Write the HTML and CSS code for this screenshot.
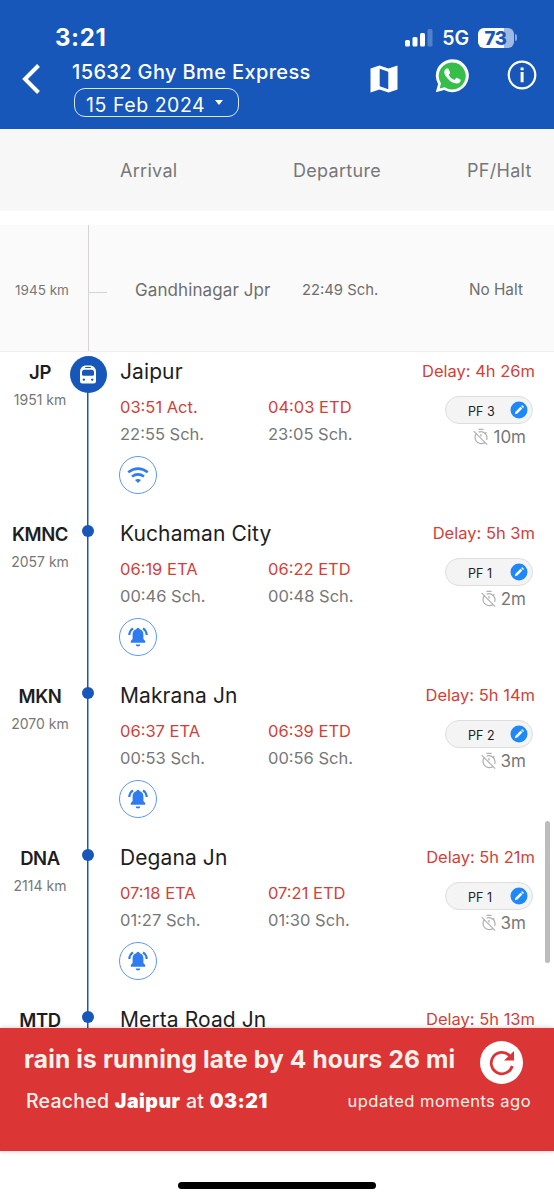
FILE: index.html
```html
<!DOCTYPE html>
<html lang="en">
<head>
<meta charset="utf-8">
<title>15632 Ghy Bme Express</title>
<link rel="stylesheet" href="styles.css">
</head>
<body>
<svg class="defs" width="0" height="0" aria-hidden="true">
  <symbol id="pencil" viewBox="0 0 18 18"><circle cx="9" cy="9" r="8.5" fill="#1e88f7"/><path d="M4.800 13.300l.7-2.600 5-5 1.900 1.900-5 5zM11.100 5.100l.6-.6q.4-.4.900 0l1 1q.4.5 0 .9l-.6.6z" fill="#fff"/></symbol>
  <symbol id="timer" viewBox="0 0 18 18"><g fill="none" stroke="#b0b0b0" stroke-width="1.200"><path d="M6.500 1.300h5M13.400 4.200l1 1M4.700 5.200A6.200 6.200 0 0 0 13.200 14.200M6.600 4.100A6.200 6.200 0 0 1 14.600 12M9 6v2.500M1.700 3.200l13.500 13.500"/></g></symbol>
  <symbol id="bell" viewBox="0 0 22 22"><path d="M11 1.800a1.700 1.700 0 0 0-1.700 1.500C6.500 4.100 5.600 6.200 5.600 8.600v4.500L3.800 15v1.700h14.400V15l-1.800-1.900V8.600c0-2.400-.9-4.500-3.700-5.300A1.700 1.700 0 0 0 11 1.800zM8.700 18.600a2.300 2 0 0 0 4.600 0z" fill="#2f7cf0"/><path d="M6 2.400Q2.700 4.500 2.300 9M16 2.400q3.300 2.100 3.700 6.600" fill="none" stroke="#2f7cf0" stroke-width="2.200"/></symbol>
</svg>
<div class="screen">
  <header class="top">
    <div class="status">
      <span class="clock">3:21</span>
      <svg class="signal" width="28" height="18" viewBox="0 0 28 18"><g fill="#fff"><rect x="0" y="11" width="5" height="6.500" rx="1.500"/><rect x="7.500" y="8" width="5" height="9.500" rx="1.500"/><rect x="15" y="4" width="5" height="13.500" rx="1.500"/><rect x="22.500" y="0" width="5" height="17.500" rx="1.500" opacity=".25"/></g></svg>
      <span class="net">5G</span>
      <span class="battery">73</span><i class="nub"></i>
    </div>
    <div class="bar">
      <svg class="back" width="20" height="32" viewBox="0 0 20 32"><path d="M17.500 2.500L4 16l13.500 13.500" fill="none" stroke="#fff" stroke-width="4"/></svg>
      <div class="heading">
        <h1>15632 Ghy Bme Express</h1>
        <div class="date"><span>15 Feb 2024</span><i></i></div>
      </div>
      <svg class="map" width="28" height="28" viewBox="0 0 28 28"><path fill="#fff" fill-rule="evenodd" d="M.5 3.500L9.500.5 18.500 3.500 27.500.5V24.500L18.500 27.500 9.500 24.500.5 27.500zM9.700 3.800V21.300L18.300 24.200V6.700z"/></svg>
      <svg class="wa" width="34" height="34" viewBox="0 0 34 34"><path d="M.8 33.200L3.100 25A16.500 16.500 0 1 1 9.200 31z" fill="#fff"/><path d="M4.600 29.600L6 24.500A13.500 13.500 0 1 1 9.700 28.200z" fill="#35bf4a"/><path d="M11.500 9.500h1.200q.7 0 1 .8l1.300 3q.3.600-.2 1.200l-1.200 1.500q2 3.700 5.900 5.100l1.600-2q.5-.5 1.100-.2l3.100 1.500q.6.300.4 1.100-.6 3-4.100 3.100-4.800-.2-9-5-3.300-3.500-3.500-6.300.1-2.600 2.400-3.800z" fill="#fff"/></svg>
      <svg class="info" width="30" height="30" viewBox="0 0 30 30"><circle cx="15" cy="15" r="13.300" fill="none" stroke="#fff" stroke-width="2.200"/><path d="M13.600 7.500h3v2.800h-3zM13.600 12h3V22.300h-3z" fill="#fff"/></svg>
    </div>
  </header>
  <div class="columns"><span>Arrival</span><span>Departure</span><span>PF/Halt</span></div>
  <main class="list">
    <section class="pass">
      <span class="km">1945 km</span><i class="tick"></i><span class="pass-name">Gandhinagar Jpr</span><span class="pass-time">22:49 Sch.</span><span class="pass-halt">No Halt</span>
    </section>
    <section class="stop current">
      <div class="place"><b>JP</b><span class="km">1951 km</span></div>
      <div class="rail"><span class="train"><svg width="18" height="20" viewBox="0 0 18 20"><path fill="#fff" fill-rule="evenodd" d="M6 .5h6q5 1.200 5 6.500v9q0 2.500-2.500 2.500h-11Q1 18.500 1 16V7Q1 1.700 6 .5zM6.200 2v1h5.600V2zM5.500 4.800Q3 4.800 3 7.300v2q0 1.500 1.500 1.500h9q1.500 0 1.500-1.500v-2q0-2.500-2.500-2.500zM4.800 13.400a1.200 1.200 0 1 0 .1 0zM13.200 13.400a1.200 1.200 0 1 0 .1 0z"/></svg></span></div>
      <div class="body"><h2>Jaipur</h2><div class="times late"><span>03:51 Act.</span><span>04:03 ETD</span></div><div class="times"><span>22:55 Sch.</span><span>23:05 Sch.</span></div><span class="round"><svg width="22" height="22" viewBox="0 0 22 22"><path d="M1.200 8.300q9.800-7.400 19.600 0M5 12.500q6-4.400 12 0" fill="none" stroke="#2f7cf0" stroke-width="2.600"/><path d="M8 15.900q3-2 6 0l-3 3.100z" fill="#2f7cf0"/></svg></span></div>
      <div class="side"><span class="delay">Delay: 4h 26m</span><span class="pf"><span>PF 3</span><svg width="18" height="18"><use href="#pencil"/></svg></span><span class="halt"><svg width="18" height="18"><use href="#timer"/></svg>10m</span></div>
    </section>
    <section class="stop">
      <div class="place"><b>KMNC</b><span class="km">2057 km</span></div><div class="rail"><i class="dot"></i></div>
      <div class="body"><h2>Kuchaman City</h2><div class="times late"><span>06:19 ETA</span><span>06:22 ETD</span></div><div class="times"><span>00:46 Sch.</span><span>00:48 Sch.</span></div><span class="round"><svg width="22" height="22"><use href="#bell"/></svg></span></div>
      <div class="side"><span class="delay">Delay: 5h 3m</span><span class="pf"><span>PF 1</span><svg width="18" height="18"><use href="#pencil"/></svg></span><span class="halt"><svg width="18" height="18"><use href="#timer"/></svg>2m</span></div>
    </section>
    <section class="stop">
      <div class="place"><b>MKN</b><span class="km">2070 km</span></div><div class="rail"><i class="dot"></i></div>
      <div class="body"><h2>Makrana Jn</h2><div class="times late"><span>06:37 ETA</span><span>06:39 ETD</span></div><div class="times"><span>00:53 Sch.</span><span>00:56 Sch.</span></div><span class="round"><svg width="22" height="22"><use href="#bell"/></svg></span></div>
      <div class="side"><span class="delay">Delay: 5h 14m</span><span class="pf"><span>PF 2</span><svg width="18" height="18"><use href="#pencil"/></svg></span><span class="halt"><svg width="18" height="18"><use href="#timer"/></svg>3m</span></div>
    </section>
    <section class="stop">
      <div class="place"><b>DNA</b><span class="km">2114 km</span></div><div class="rail"><i class="dot"></i></div>
      <div class="body"><h2>Degana Jn</h2><div class="times late"><span>07:18 ETA</span><span>07:21 ETD</span></div><div class="times"><span>01:27 Sch.</span><span>01:30 Sch.</span></div><span class="round"><svg width="22" height="22"><use href="#bell"/></svg></span></div>
      <div class="side"><span class="delay">Delay: 5h 21m</span><span class="pf"><span>PF 1</span><svg width="18" height="18"><use href="#pencil"/></svg></span><span class="halt"><svg width="18" height="18"><use href="#timer"/></svg>3m</span></div>
    </section>
    <section class="stop last">
      <div class="place"><b>MTD</b></div><div class="rail"><i class="dot"></i></div>
      <div class="body"><h2>Merta Road Jn</h2></div>
      <div class="side"><span class="delay">Delay: 5h 13m</span></div>
    </section>
    <i class="scrollbar"></i>
  </main>
  <footer class="alert">
    <div class="running"><strong>rain is running late by 4 hours 26 mi</strong>
      <span class="refresh"><svg width="30" height="30" viewBox="0 0 30 30"><path d="M25.200 18A10.700 10.700 0 1 1 22.500 7.500L25 9.500" fill="none" stroke="#dc3535" stroke-width="2.800"/><path d="M27 3V12.500H17z" fill="#dc3535"/></svg></span></div>
    <div class="reached"><span>Reached <b>Jaipur</b> at <b>03:21</b></span><em>updated moments ago</em></div>
  </footer>
  <div class="home"><i></i></div>
</div>
</body>
</html>
```
FILE: styles.css
```css
* { box-sizing: border-box; }
body { margin: 0; background: #fff; font-family: Inter, Roboto, sans-serif; }
h1, h2 { margin: 0; font-weight: 400; }
svg { display: block; flex: none; }
.defs { position: absolute; }
.screen { display: flex; flex-direction: column; width: 554px; height: 1200px; overflow: hidden; white-space: nowrap; }

.top { height: 129px; background: #1657b9; color: #fff; }
.status { display: flex; align-items: center; height: 56px; padding: 19px 37px 0 55px; }
.clock { flex: 1; font-size: 24px; font-weight: 700; letter-spacing: .6px; }
.net { margin: 0 9px 0 9px; font-size: 19.500px; font-weight: 600; }
.battery { width: 36px; height: 20px; padding-right: 1px; border-radius: 6px; background: linear-gradient(90deg, #fff 73%, #a0b9e3 73%); color: #1657b9; font-size: 18.500px; line-height: 20px; font-weight: 800; text-align: center; letter-spacing: -.3px; }
.nub { width: 2px; height: 7px; margin-left: 1px; border-radius: 0 2px 2px 0; background: #8aa8dc; }
.bar { display: flex; align-items: flex-start; height: 73px; padding-left: 21px; }
.back { margin-top: 7px; }
.heading { width: 298px; margin-left: 31px; }
.heading h1 { font-size: 20px; line-height: 33px; font-weight: 500; letter-spacing: .36px; }
.date { display: flex; align-items: center; width: 165px; height: 29px; margin-left: 2px; margin-top: -1px; padding: 4px 0 0 11px; border: 1.5px solid #dbe7fa; border-radius: 11px; font-size: 19.500px; line-height: 24px; letter-spacing: .55px; }
.date i { margin: -5px 0 0 10px; border: 4.500px solid transparent; border-top: 5px solid #fff; border-bottom: 0; }
.map { margin: 9px 0 0 0; }
.wa { margin: 3px 0 0 37px; }
.info { margin: 4px 0 0 38px; }

.columns { display: grid; grid-template-columns: 173px 174px 1fr; align-items: center; height: 82px; padding-left: 120px; background: #f7f7f7; color: #777; font-size: 18px; letter-spacing: .3px; }
.list { position: relative; height: 817px; padding-top: 14px; overflow: hidden; }
.pass { display: grid; grid-template-columns: 88px 47px 167px 167px 1fr; align-items: center; height: 127px; border-bottom: 1px solid #eee; color: #6e6e6e; background: linear-gradient(#d8d4d6, #d8d4d6) 88px 0 / 1px 100% no-repeat #fafafa; }
.pass > span { padding-top: 4px; }
.km { color: #777; font-size: 14px; line-height: 20px; text-align: center; }
.pass .km { padding-right: 4px; font-size: 13.500px; }
.tick { width: 19px; height: 1px; margin-top: 9px; background: #d8d4d6; }
.pass-name { font-size: 17px; letter-spacing: .1px; }
.pass-time { font-size: 14.800px; }
.pass .pass-halt { padding-top: 3px; font-size: 15.300px; }

.stop { display: grid; grid-template-columns: 80px 16px 1fr 110px; height: 162px; padding-right: 19px; }
.last { height: 28px; }
.place { display: flex; flex-direction: column; padding-top: 7px; text-align: center; }
.place b { font-size: 18.500px; line-height: 26px; font-weight: 600; letter-spacing: -.4px; color: #1e1e1e; }
.place .km { margin-top: 5px; }
.rail { display: flex; justify-content: center; background: linear-gradient(#1657b9, #1657b9) center / 1.5px 100% no-repeat; }
.dot { flex: none; width: 12px; height: 12px; margin-top: 11px; border-radius: 50%; background: #1657b9; }
.current .rail { background-size: 1.5px 140px; background-position: center bottom; }
.train { display: flex; flex: none; align-items: center; justify-content: center; width: 37px; height: 37px; margin-top: 4px; border-radius: 50%; background: #1657b9; }
.body { padding: 4px 0 0 24px; }
.body h2 { font-size: 21px; line-height: 32px; color: #1e1e1e; margin-bottom: 6px; letter-spacing: .1px; }
.times { display: grid; grid-template-columns: 148px 1fr; color: #777; font-size: 16.500px; line-height: 27px; }
.late, .delay { color: #d33f38; }
.round { display: flex; align-items: center; justify-content: center; width: 38px; height: 38px; margin: 8px 0 0 -1px; border: 1px solid #5c98f2; border-radius: 50%; }
.side { display: flex; flex-direction: column; align-items: flex-end; padding-top: 4px; }
.delay { font-size: 16.500px; line-height: 30px; }
.pf { display: flex; align-items: center; justify-content: space-between; width: 88px; height: 28px; margin: 10px 2px 0 0; padding: 0 4px 0 22px; border: 1px solid #dedede; border-radius: 14px; background: #f4f4f4; color: #222; font-size: 12.500px; }
.pf span { padding-top: 3px; }
.halt { display: flex; align-items: center; gap: 3px; margin: 1px 9px 0 0; color: #777; font-size: 17px; line-height: 24px; }
.scrollbar { position: absolute; right: 4px; top: 610px; width: 5px; height: 142px; border-radius: 3px; background: #bcbcbc; }

.alert { z-index: 1; height: 123px; padding: 12px 23px 0 24px; background: #dc3535; color: #fff2ec; box-shadow: 0 0 5px rgba(0, 0, 0, .22); }
.running { display: flex; align-items: flex-start; justify-content: space-between; height: 44px; padding-right: 8px; }
.running strong { font-size: 24.500px; line-height: 39px; font-weight: 700; letter-spacing: .15px; }
.refresh { display: flex; align-items: center; justify-content: center; width: 43px; height: 43px; margin-top: 1px; border-radius: 50%; background: #fff; }
.reached { display: flex; align-items: center; justify-content: space-between; padding: 2px 0 0 2px; font-size: 19.500px; font-weight: 500; line-height: 28px; letter-spacing: .25px; }
.reached b { font-weight: 900; color: #fff; letter-spacing: .5px; }
.reached em { padding-top: 1px; font-size: 16.500px; font-weight: 400; font-style: normal; letter-spacing: .45px; }
.home { display: flex; justify-content: center; padding-top: 31px; }
.home i { width: 198px; height: 7px; border-radius: 4px; background: #000; }
```
